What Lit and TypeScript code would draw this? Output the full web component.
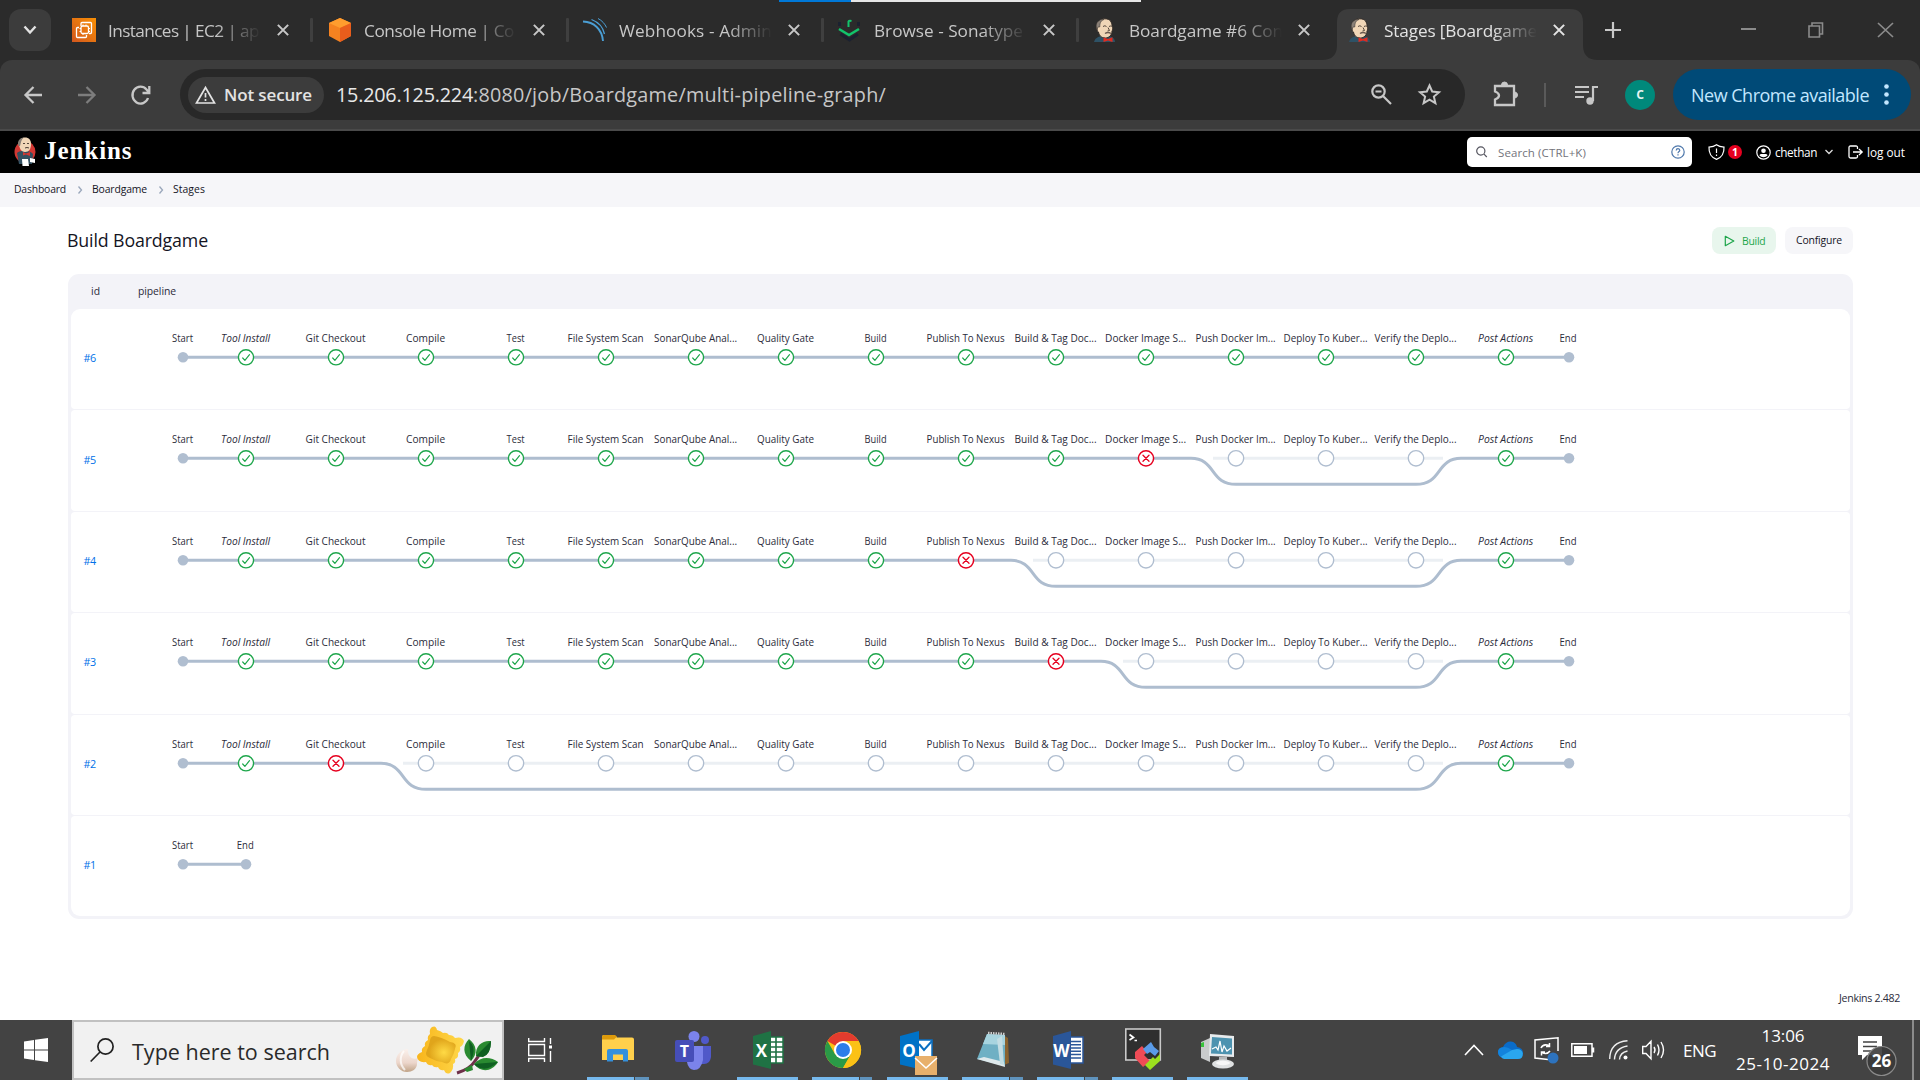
import { LitElement, html, svg, css, nothing } from "lit";
import { customElement } from "lit/decorators.js";

/* ---------- icons ---------- */
const butler = html`<svg class="fav" viewBox="0 0 24 24">
  <path d="M1 24C2 20 5 19 8 18L16 18C20 19 22 21 22 24Z" fill="#2e5266"/>
  <path d="M4 8C4 3 8 .8 12 .8C17 .8 19 4 19 8C20 10 20 12 19 13C19 17 16 20 12.500 20C8 20 6 17 5.500 14C3.500 13 3.500 10 4 8Z" fill="#f0d6b7" stroke="#332c28" stroke-width="1"/>
  <path d="M4 12C2.500 8 3 4 6.500 2.400C8 1 10 1 11 1.500C7 3 7 6 6.800 9L5 9Z" fill="#8a8077" stroke="#332c28" stroke-width=".5"/>
  <path d="M10 8.500Q12 7 13.500 8.500M16 8.500Q17.500 7.500 18.500 8.500M15 9.500L16.500 12.500L14.500 13" fill="none" stroke="#54463c" stroke-width="1"/>
  <path d="M12 15.500Q15 13.500 18 15.500" fill="none" stroke="#6b5b50" stroke-width="1.500"/>
  <path d="M10.500 19.500L15 21L19.500 19.200L19.500 24L15 22.500L10.500 24Z" fill="#e02b20"/>
</svg>`;

const favicons = [
  html`<svg class="fav" viewBox="0 0 24 24"><defs><linearGradient id="e" x1="0" y1="1" x2="1" y2="0"><stop offset="0" stop-color="#d2571e"/><stop offset="1" stop-color="#f99004"/></linearGradient></defs><rect width="24" height="24" fill="url(#e)"/><g fill="none" stroke="#fff" stroke-width="1.300"><path d="M9 8V5.500Q9 4.500 10 4.500H18.500Q19.500 4.500 19.500 5.500V14.500Q19.500 15.500 18.500 15.500H17M7 9.500H5.500Q4.500 9.500 4.500 10.500V18.500Q4.500 19.500 5.500 19.500H13.500Q14.500 19.500 14.500 18.500V17"/><rect x="9" y="8" width="7.500" height="7.500" rx="1.500"/><path d="M11 6.500V8M14 6.500V8M11 15.500V17M7.500 10.500H9M7.500 13.500H9M16.500 10.500H18M16.500 13.500H18" stroke-width="1"/></g></svg>`,
  html`<svg class="fav" viewBox="0 0 24 24"><path d="M12 0L23 5V18L12 24L1 18V5Z" fill="#f58220"/><path d="M12 0L23 5L12 10L1 5Z" fill="#ff9d2e"/><path d="M12 10L23 5V18L12 24Z" fill="#e95d1c"/></svg>`,
  html`<svg class="fav" viewBox="0 0 24 24" fill="none" stroke="#4b9fd5"><path d="M0 3.500C11 4 19 11 20 23" stroke-width="1.900"/><path d="M8.500 1.500C15 4 20 9 21.500 16" stroke-width="1.300"/><path d="M15 .5C19 2.500 22 6 23.500 9.500" stroke-width="1"/></svg>`,
  html`<svg class="fav" viewBox="0 0 24 24" fill="none"><path d="M1.500 4V8M20.500 4V8M2.500 16L11.500 22L20 16" stroke="#1b2130" stroke-width="3"/><path d="M1 11L11 17L21 11" stroke="#12c46c" stroke-width="2.600"/><path d="M10.500 9V3.500Q11 2.500 13.500 3" stroke="#12c46c" stroke-width="2"/></svg>`,
  butler,
  butler,
];

const cross = html`<svg class="x15" viewBox="0 0 15 15"><path d="M2 2L13 13M13 2L2 13" stroke="currentColor" stroke-width="2.200"/></svg>`;

const tabs = [
  ["Instances | EC2 | ap", 151],
  ["Console Home | Co", 150],
  ["Webhooks - Admin", 153],
  ["Browse - Sonatype", 149],
  ["Boardgame #6 Con", 154],
  ["Stages [Boardgame", 153],
] as [string, number][];

/* ---------- pipeline data ---------- */
const stages: [string, number][] = [
  ["Tool Install", 49], ["Git Checkout", 60], ["Compile", 39], ["Test", 18], ["File System Scan", 76],
  ["SonarQube Anal...", 83], ["Quality Gate", 57], ["Build", 22], ["Publish To Nexus", 78], ["Build & Tag Doc...", 82],
  ["Docker Image S...", 81], ["Push Docker Im...", 80], ["Deploy To Kuber...", 84], ["Verify the Deplo...", 82], ["Post Actions", 55],
];
/* `failed` is the index of the failing stage; everything up to Post Actions is skipped after it. */
const runs: { id: string; failed?: number; empty?: boolean }[] = [
  { id: "#6" }, { id: "#5", failed: 10 }, { id: "#4", failed: 8 }, { id: "#3", failed: 9 }, { id: "#2", failed: 1 }, { id: "#1", empty: true },
];
const X0 = 15, Y = 48.3, DROP = 26;
const sx = (i: number) => 78 + i * 90;
const POST = stages.length - 1;
const END = sx(POST) + 63;

@customElement("pipeline-graph")
class PipelineGraph extends LitElement {
  static properties = { run: { attribute: false } };
  declare run: { id: string; failed?: number; empty?: boolean };
  static styles = css`
    :host { display: block; }
    svg { display: block; width: 1500px; height: 100px; }
    text { font: 400 10.500px "Open Sans", "Noto Sans", sans-serif; fill: #2b2b3a; text-anchor: middle; }
    .it { font-style: italic; }
    .line { fill: none; stroke: #aebdcf; stroke-width: 3; }
    .faint { fill: none; stroke: #ebeff3; stroke-width: 3; }
    .dot { fill: #b0bed0; }
    .ok { fill: #fff; stroke: #1ea64b; stroke-width: 1.400; }
    .bad { fill: #fff; stroke: #e6001f; stroke-width: 1.500; }
    .skip { fill: #fff; stroke: #b0bed0; stroke-width: 1.400; }
    .g { fill: none; stroke: #1ea64b; stroke-width: 1.200; stroke-linecap: round; stroke-linejoin: round; }
    .r { fill: none; stroke: #e6001f; stroke-width: 1.300; stroke-linecap: round; }
  `;
  label(x: number, s: string, w: number, it = false) {
    return svg`<text class=${it ? "it" : ""} x=${x} y="33" textLength=${w} lengthAdjust="spacingAndGlyphs">${s}</text>`;
  }
  render() {
    const r = this.run;
    if (r.empty)
      return html`<svg><path class="line" d="M${X0} ${Y}H78"/>
        <circle class="dot" cx=${X0} cy=${Y} r="5.300"/><circle class="dot" cx="78" cy=${Y} r="5.300"/>
        ${this.label(X0 - 0.5, "Start", 21)}${this.label(77.3, "End", 17)}</svg>`;
    const f = r.failed;
    const path = f === undefined
      ? svg`<path class="line" d="M${X0} ${Y}H${END}"/>`
      : svg`<path class="faint" d="M${sx(f) + 67} ${Y}H${sx(POST) - 63}"/>
          <path class="line" d="M${X0} ${Y}H${sx(f) + 45}c12 0 17 6 22 13c5 7 10 13 23 13H${sx(POST) - 90}c13 0 18 -6 23 -13c5 -7 10 -13 22 -13H${END}"/>`;
    return html`<svg>${path}
      <circle class="dot" cx=${X0} cy=${Y} r="5.300"/><circle class="dot" cx=${END} cy=${Y} r="5.300"/>
      ${this.label(X0 - 0.5, "Start", 21)}
      ${stages.map(([name, w], i) => {
        const x = sx(i);
        const skipped = f !== undefined && i > f && i < POST;
        const mark = skipped ? svg`<circle class="skip" cx=${x} cy=${Y} r="7.700"/>`
          : i === f ? svg`<circle class="bad" cx=${x} cy=${Y} r="7.600"/><path class="r" d="M${x - 3} ${Y - 3}l6 6m0 -6l-6 6"/>`
          : svg`<circle class="ok" cx=${x} cy=${Y} r="7.600"/><path class="g" d="M${x - 3.3} ${Y + 0.7}l2.200 2.300l4.600 -5.600"/>`;
        return svg`${this.label(x - 0.4, name, w, i === 0 || i === POST)}${mark}`;
      })}
      ${this.label(END - 1, "End", 17)}</svg>`;
  }
}

/* ---------- taskbar icons ---------- */
const office = (dark: string, light: string, ch: string, lines: unknown) => html`<svg class="app" viewBox="0 0 36 40">
  <rect x="18" y="7" width="15" height="26" fill="#fff" stroke=${light} stroke-width="1.500"/>${lines}
  <path d="M3 6L21 1V39L3 34.500Z" fill=${dark}/><text x="11.500" y="26.500" class="ic">${ch}</text></svg>`;

const apps: { icon: unknown; bar?: number; more?: number }[] = [
  { bar: 47, more: 14, icon: html`<svg class="app" viewBox="0 0 36 40"><path d="M2 7Q2 5 4 5H14L17 7.500H32Q34 7.500 34 9.500V30H2Z" fill="#ffd04c"/><path d="M2 7Q2 5 4 5H15L17 6.500L14 9.500H2Z" fill="#dd9a0b"/><path d="M7 31.500V21Q7 19 9 19H26Q28 19 28 21V31.500H23V24.500H13V31.500Z" fill="#3490dc"/></svg>` },
  { icon: html`<svg class="app" viewBox="0 0 36 40"><circle cx="30" cy="10" r="4" fill="#5059c9"/><circle cx="19" cy="6.500" r="5.500" fill="#7b83eb"/><path d="M25 16H36V27Q35 34 29 34H25Z" fill="#5059c9"/><path d="M12 16H28V30Q26 40 19 40Q13 39 12 32Z" fill="#7b83eb"/><rect x="0" y="10" width="19" height="22" rx="2" fill="#464eb8"/><text x="9.500" y="27" class="ic t">T</text></svg>` },
  { bar: 61, icon: office("#1f7244", "#1f7244", "X", svg`<path d="M21 12H33M21 17H33M21 22H33M21 27H33M26 7V33" stroke="#1f7244" stroke-width="1.600"/>`) },
  { bar: 47, more: 12, icon: html`<svg class="app" viewBox="0 0 36 36"><circle cx="18" cy="18" r="18" fill="#fbc116"/><path d="M18 18L2.400 9A18 18 0 0 1 33.600 9Z" fill="#e33b2e"/><path d="M2.400 9A18 18 0 0 0 18 36L25.800 22.500L18 18L10.200 22.500Z" fill="#2a9a47"/><path d="M18 9H33.600A18 18 0 0 1 18 36L25.800 22.500Z" fill="#fbc116"/><circle cx="18" cy="18" r="9" fill="#fff"/><circle cx="18" cy="18" r="7" fill="#2d7de9"/></svg>` },
  { bar: 61, icon: html`<svg class="app" viewBox="0 0 36 40"><rect x="17" y="10" width="15" height="18" fill="#fff" stroke="#0a6fc2" stroke-width="1.500"/><path d="M19 14L24 20L32 11" stroke="#0a6fc2" stroke-width="2" fill="none"/><path d="M0 6L19 1V39L0 34.500Z" fill="#0072c6"/><text x="9" y="26.500" class="ic">O</text><rect x="15" y="26" width="22" height="19" fill="#e8b06c"/><path d="M15 28L26 38L37 28" stroke="#fff" stroke-width="1.600" fill="none"/></svg>` },
  { bar: 47, more: 13, icon: html`<svg class="app" viewBox="0 0 36 40"><path d="M28 5L33 8L34 33L29 35Z" fill="#8a6330"/><path d="M12 4L30 5L30 36L2 29Z" fill="#6fb0c4"/><path d="M12 4L30 5L30 15L8 14Z" fill="#a7d4df"/><path d="M2 29L9 27L29 32L30 37Z" fill="#dfe9ec"/><path d="M22 9L27 6L29 35L25 34Z" fill="#c3dde3"/><path d="M13 3L30 4" stroke="#cfcfcf" stroke-width="2.500" stroke-dasharray="1.500 1"/></svg>` },
  { bar: 47, more: 13, icon: office("#2a5699", "#2a5699", "W", svg`<path d="M21 11.500H31M21 14.800H31M21 18H31M21 21.300H31M21 24.600H31M21 28H31" stroke="#2a5699" stroke-width="1.500"/>`) },
  { bar: 61, icon: html`<svg class="app" viewBox="0 0 36 40"><rect x=".8" y="-1" width="34.500" height="31" fill="#2f2f2f" stroke="#c9c9c9" stroke-width="1.600"/><path d="M4.500 4.500L8.500 7.500L4.500 10M9.500 10.500H12" stroke="#fff" stroke-width="1.700" fill="none"/><path d="M10 22L17 16L22 22L19 25L25 31L18 37L10 28Z" fill="#ef4b56"/><path d="M18 19L26 12L29 17L34 21L30 26L25 22L22 24Z" fill="#5a9be8"/><path d="M35 24L35 31L25 40L20 35L28 27L30 29Z" fill="#9be01e"/></svg>` },
  { bar: 61, icon: html`<svg class="app" viewBox="0 0 36 40"><path d="M1 12L10 8V32L1 28Z" fill="#c9cbcc"/><path d="M1 13L4 12V17L1 17Z" fill="#39c33c"/><path d="M10 4L34 6V27L9 26Z" fill="#e8ebed"/><path d="M12 7L32 8.500V24.500L11 23.500Z" fill="#4d93b0"/><path d="M12 19L16 17L18 20L20 11L22 22L24 16L27 21L31 18" stroke="#fff" stroke-width="1.200" fill="none"/><path d="M19 27H27V31H19Z" fill="#b5b8ba"/><ellipse cx="23" cy="34" rx="11" ry="4.500" fill="#dfe1e2"/><ellipse cx="23" cy="33" rx="7" ry="2.200" fill="#f7f7f7"/></svg>` },
];

@customElement("app-root")
class AppRoot extends LitElement {
  static styles = css`
    :host { display: block; width: 1920px; height: 1080px; overflow: hidden; background: #fff; font-family: "Open Sans", "Noto Sans", sans-serif; color: #2b2b3a; }
    * { box-sizing: border-box; }
    svg { display: block; flex: none; overflow: visible; }
    .page { display: flex; flex-direction: column; height: 1080px; }
    .f { display: block; white-space: nowrap; flex: none; }
    .sp { flex: 1; }

    /* tab strip */
    .strip { height: 60px; background: #2b2b2b; display: flex; align-items: center; padding: 0 27px 0 9px; position: relative; flex: none; }
    .progress { position: absolute; left: 779px; top: 0; width: 362px; height: 2px; background: linear-gradient(90deg, #0078d7 72px, #e6e6e6 72px); }
    .drop { width: 42px; height: 42px; border-radius: 12px; background: #3c3c3c; display: grid; place-items: center; margin-right: 21px; }
    .tab { width: 255px; height: 60px; display: flex; align-items: center; position: relative; color: #c7c7c7; flex: none; }
    .tab.later { padding-left: 1px; }
    .fav { width: 24px; height: 24px; margin-right: 12px; position: relative; }
    .clip { width: 160px; overflow: hidden; margin-right: 8px; padding-top: 2px; font-size: 17.200px; line-height: 26px; position: relative; -webkit-mask-image: linear-gradient(90deg, #000 108px, transparent 153px); mask-image: linear-gradient(90deg, #000 108px, transparent 153px); }
    .later .clip { margin-right: 7.500px; }
    .x15 { width: 14px; height: 14px; position: relative; }
    .sep { width: 3px; height: 24px; background: #3f3f3f; margin-left: 20px; border-radius: 1px; }
    .shape { position: absolute; left: -25px; top: 9px; }
    .active { color: #e3e3e3; }
    .win { display: flex; gap: 53px; color: #8b8b8b; align-items: center; }
    .plus { color: #c9c9c9; }

    /* toolbar */
    .bar { height: 71px; background: #2b2b2b; flex: none; }
    .tool { height: 71px; background: #3c3c3c; border-radius: 12px 12px 0 0; border-bottom: 2px solid #4a4a4a; display: flex; align-items: center; padding: 0 9px 0 24px; color: #c7c7c7; }
    .omni { width: 1285px; height: 51px; border-radius: 26px; background: #282828; display: flex; align-items: center; padding: 0 24px 0 8px; margin-left: 29px; }
    .chip { width: 136px; height: 36px; border-radius: 18px; background: #3c3c3c; display: flex; align-items: center; padding-left: 7px; gap: 8px; margin-right: 12px; color: #e3e3e3; font-size: 17px; font-weight: 600; }
    .host { color: #e8e8e8; font-size: 19.800px; }
    .url { color: #c7c7c7; font-size: 19.800px; }
    .vdiv { width: 2px; height: 24px; background: #5a5a5a; margin: 0 29px 0 26px; }
    .ava { width: 30px; height: 30px; border-radius: 50%; background: #00897b; color: #e8f5f3; display: grid; place-items: center; font-size: 15.500px; margin: 0 18px 0 27px; font-weight: 600; line-height: 1; padding-bottom: 1px; }
    .new { width: 238px; height: 51px; border-radius: 26px; background: #004a77; color: #c2e7ff; display: flex; align-items: center; font-size: 18px; padding-left: 18px; gap: 15px; }

    /* Jenkins header */
    .head { height: 42px; background: #000; color: #fff; display: flex; align-items: center; padding: 0 15px 0 13px; font-size: 11.800px; font-weight: 500; flex: none; }
    .brand { font: 700 25px "Liberation Serif", serif; margin: 0 0 3px 7px; line-height: 30px; }
    .search { width: 225px; height: 30px; background: #fff; border-radius: 5px; color: #73737b; display: flex; align-items: center; padding: 0 7px 0 9px; margin-right: 16px; font-weight: 400; font-size: 11.500px; gap: 11px; }
    .count { width: 14px; height: 14px; border-radius: 50%; background: #e6001f; font-size: 10.500px; font-weight: 700; line-height: 14px; text-align: center; margin: 0 14px 0 3px; }
    .crumbs { height: 34px; background: #f6f6f9; display: flex; align-items: center; padding: 0 0 2px 14px; font-size: 10.400px; color: #14141f; flex: none; }
    .chev { margin: 2px 10.500px 0 11.500px; }

    /* content */
    .main { padding: 20px 67px 0 68px; height: 813px; display: flex; flex-direction: column; flex: none; }
    .title { display: flex; align-items: center; height: 27px; margin-bottom: 20px; }
    h1 { margin: 0 0 2px -1px; font-size: 17.800px; font-weight: 500; color: #14141f; }
    .btn { height: 27px; border-radius: 8px; display: flex; align-items: center; font-size: 10.400px; background: #f6f6f9; }
    .build { width: 64px; background: #e8f6ed; color: #1ea64b; padding-left: 12px; gap: 7px; margin-right: 9px; }
    .conf { width: 68px; padding-left: 11px; color: #14141f; padding-bottom: 2px; }
    .table { background: #f3f3f8; border-radius: 11px; padding: 0 3px 3px; }
    .th { height: 35px; display: flex; align-items: center; font-size: 10.400px; padding: 0 0 1px 20px; gap: 38px; }
    .rows { display: grid; grid-template-rows: repeat(6, 100.400px); row-gap: 1px; }
    .row { background: #fff; border-radius: 4px; display: flex; overflow: hidden; }
    .row:first-child { border-radius: 9px 9px 4px 4px; }
    .row:last-child { border-radius: 4px 4px 9px 9px; }
    .id { width: 97px; height: 97.500px; display: flex; align-items: center; padding-left: 12.500px; font-size: 10.800px; color: #0071e8; }
    .foot { display: flex; justify-content: flex-end; margin: auto -47px 12px 0; font-size: 10.600px; line-height: 20px; }

    /* taskbar */
    .task { height: 60px; background: #434343; display: flex; align-items: center; color: #fff; flex: none; }
    .start { width: 72px; display: grid; place-items: center; flex: none; }
    .find { width: 432px; height: 60px; background: #f1f1f1; border: 2px solid #c1c1c1; display: flex; align-items: center; padding: 0 4px 0 16px; color: #2a2a2a; font-size: 21.500px; flex: none; }
    .find .f { margin: 2px 0 0 18px; }
    .tv { margin: 0 35px 0 24px; }
    .cell { width: 61px; height: 60px; margin-right: 14px; display: flex; align-items: center; justify-content: center; position: relative; flex: none; }
    .app { width: 36px; height: 40px; }
    .ic { font: 700 17px "Open Sans", sans-serif; fill: #fff; text-anchor: middle; }
    .t { font-size: 16px; }
    .ul { position: absolute; left: 0; bottom: 0; height: 3px; background: #76b9ed; }
    .ul2 { position: absolute; left: 48px; bottom: 0; height: 3px; background: #5f93bd; }
    .tray { display: flex; align-items: center; font-size: 17px; flex: 1; padding-left: 203px; }
    .clock { display: flex; flex-direction: column; align-items: center; width: 94px; margin: 0 28px 0 20px; line-height: 28px; font-size: 17px; flex: none; }
  `;

  /* Spread each label over its designed width by adjusting its tracking. */
  firstUpdated() {
    this.renderRoot.querySelectorAll<HTMLElement>("[data-w]").forEach((el) => {
      const want = Number(el.dataset.w);
      const range = document.createRange();
      range.selectNodeContents(el);
      const have = range.getBoundingClientRect().width;
      const n = (el.textContent ?? "").length;
      el.style.letterSpacing = `${(want - have) / n}px`;
      el.style.width = `${want}px`;
    });
  }

  t(s: string, w: number, cls = "") {
    return html`<span class="f ${cls}" data-w=${w}>${s}</span>`;
  }

  render() {
    return html`<div class="page">
      <div class="strip">
        <div class="progress"></div>
        <div class="drop"><svg width="14" height="10" viewBox="0 0 14 10"><path d="M1.500 1.500L7 7.500L12.500 1.500" fill="none" stroke="#e3e3e3" stroke-width="2.400"/></svg></div>
        ${tabs.map(([s, w], i) => html`<div class="tab ${i ? "later" : ""} ${i === 5 ? "active" : ""}">
          ${i === 5 ? html`<svg class="shape" width="276" height="51"><path d="M0 51Q15 51 15 36V13Q15 0 28 0H248Q261 0 261 13V36Q261 51 276 51Z" fill="#3c3c3c"/></svg>` : nothing}
          ${favicons[i]}<div class="clip">${this.t(s, w)}</div>${cross}${i < 4 ? html`<div class="sep"></div>` : nothing}
        </div>`)}
        <svg class="plus" width="22" height="16" viewBox="0 0 22 16"><path d="M11 0V16M3 8H19" stroke="currentColor" stroke-width="2.200"/></svg>
        <div class="sp"></div>
        <div class="win">
          <svg width="15" height="16"><path d="M0 7H15" stroke="currentColor" stroke-width="2"/></svg>
          <svg width="16" height="16" fill="none" stroke="currentColor" stroke-width="1.600"><path d="M0 4H10.500V15H0ZM3 4V1H13.500V12H10.500"/></svg>
          <svg width="15" height="16"><path d="M0 1L15 15M15 1L0 15" stroke="currentColor" stroke-width="1.700"/></svg>
        </div>
      </div>
      <div class="bar"><div class="tool">
        <svg width="18" height="18" fill="none" stroke="currentColor" stroke-width="2.300"><path d="M18 9H2M9.500 1L1.500 9L9.500 17"/></svg>
        <svg width="54" height="18" viewBox="-36 0 54 18" fill="none" stroke="#7d7d7d" stroke-width="2.300"><path d="M0 9H16M8.500 1L16.500 9L8.500 17"/></svg>
        <svg width="55" height="20" viewBox="-35 0 55 20" fill="none" stroke="currentColor" stroke-width="2.300"><path d="M17 13A8 8.500 0 1 1 15.500 4.500L18 7.500M18.300 1V8H11.500"/></svg>
        <div class="omni">
          <div class="chip"><svg width="21" height="18" viewBox="0 0 21 18" fill="none" stroke="currentColor" stroke-width="1.700"><path d="M10.500 1.500L19.500 17H1.500Z"/><path d="M10.500 7V11.500M10.500 13V15"/></svg>${this.t("Not secure", 88)}</div>
          ${this.t("15.206.125.224", 137, "host")}${this.t(":8080/job/Boardgame/multi-pipeline-graph/", 413, "url")}
          <div class="sp"></div>
          <svg width="21" height="21" viewBox="0 0 21 21" fill="none" stroke="currentColor" stroke-width="2.200"><circle cx="7.500" cy="7.500" r="6.200"/><path d="M12 12L20 20M4.500 7.500H10.500"/></svg>
          <svg width="49" height="23" viewBox="-26 0 49 23" fill="none" stroke="currentColor" stroke-width="2"><path d="M11.500 2.500L14.200 8.500L21 9.200L15.900 13.600L17.400 20.200L11.500 16.700L5.600 20.200L7.100 13.600L2 9.200L8.800 8.500Z"/></svg>
        </div>
        <svg width="53" height="26" viewBox="-28 1 53 26" fill="none" stroke="currentColor" stroke-width="2.300"><path d="M2 5H21V24H2V18.500Q6 17 6 14.500Q6 12 2 10.500Z"/><path d="M8.500 4Q8.500 1 11.500 1Q14.500 1 14.500 4M22 11Q24.500 11.500 24.500 14Q24.500 16.500 22 17" fill="currentColor" stroke-width="1"/></svg>
        <div class="vdiv"></div>
        <svg width="23" height="20" viewBox="0 0 23 20" fill="none" stroke="currentColor" stroke-width="2.200"><path d="M0 2H14M0 7H14M0 12H9M18 16V2H23"/><circle cx="15" cy="16" r="3.700" fill="currentColor" stroke="none"/></svg>
        <div class="ava">c</div>
        <div class="new">${this.t("New Chrome available", 178)}<svg width="5" height="21" fill="currentColor"><circle cx="2.500" cy="2.500" r="2.300"/><circle cx="2.500" cy="10.500" r="2.300"/><circle cx="2.500" cy="18.500" r="2.300"/></svg></div>
      </div></div>

      <div class="head">
        <svg width="24" height="30" viewBox="0 0 24 30"><ellipse cx="12" cy="15" rx="10.500" ry="11" fill="#d33833"/><path d="M4 16C7 13 17 13 20 17L19 27H6Z" fill="#335061"/><path d="M9 22H15L16 29H9.500Z" fill="#fff"/><path d="M17 21L22 22V26L17 25Z" fill="#fff"/><path d="M6 6C6 2 9 .5 12 .5C16 .5 18 3 18 7C18 12 16 15 12 15C8 15 6 11 6 6Z" fill="#f0d6b7"/><path d="M5.500 9C4 5 6 1 10.500 .8C8 3 8 6 7 9Z" fill="#8a8077"/><path d="M10 6.500H12M14 6.500H16M12 11Q14 10 16 11" stroke="#54463c"/><path d="M10 15L13 16.500L17 15V19L13 17.500L10 18.500Z" fill="#d33833"/></svg>
        ${this.t("Jenkins", 88.5, "brand")}
        <div class="sp"></div>
        <div class="search"><svg width="11" height="12" viewBox="0 0 11 12" fill="none" stroke="#55555f" stroke-width="1.200"><circle cx="4.800" cy="5" r="4.100"/><path d="M8 8.200L10.800 11"/></svg>${this.t("Search (CTRL+K)", 88)}<span class="sp"></span>
          <svg width="14" height="14" viewBox="0 0 14 14" fill="none" stroke="#4f78ab" stroke-width="1.200"><circle cx="7" cy="7" r="6.200"/><path d="M5.200 5.500Q5.300 3.700 7 3.700Q8.800 3.800 8.800 5.400Q8.700 6.300 7.600 6.900Q7 7.300 7 8.200M7 9.300V10.600"/></svg></div>
        <svg width="17" height="16" viewBox="0 0 17 16" fill="none" stroke="#fff" stroke-width="1.200"><path d="M8.500 .7C6.500 2.300 3.500 3 1 3.100C.7 9 3.500 13.500 8.500 15.400C13.500 13.500 16.300 9 16 3.100C13.500 3 10.500 2.300 8.500 .7ZM8.500 4.500V9M8.500 10.500V12"/></svg>
        <span class="count">1</span>
        <svg width="15" height="15" viewBox="0 0 15 15"><circle cx="7.500" cy="7.500" r="6.700" fill="none" stroke="#fff" stroke-width="1.200"/><circle cx="7.500" cy="5.700" r="2.300" fill="#fff"/><path d="M3.500 10.500Q3.500 9 5 9H10Q11.500 9 11.500 10.500Q10 12.300 7.500 12.300Q5 12.300 3.500 10.500Z" fill="#fff"/></svg>
        <svg width="4" height="1"></svg>${this.t("chethan", 42)}
        <svg width="31" height="6" viewBox="-8 0 31 6" fill="none" stroke="#ddd" stroke-width="1.300"><path d="M.5 1L4 4.500L7.500 1"/></svg>
        <svg width="19" height="14" viewBox="0 0 19 14" fill="none" stroke="#fff" stroke-width="1.300"><path d="M9.500 4V2.500Q9.500 1 8 1H2.500Q1 1 1 2.500V11.500Q1 13 2.500 13H8Q9.500 13 9.500 11.500V10M5 7H14M11 4L14.200 7L11 10"/></svg>
        ${this.t("log out", 38)}
      </div>
      <div class="crumbs">${this.t("Dashboard", 52)}
        <svg class="chev" width="4" height="8" fill="none" stroke="#9aa7bb" stroke-width="1.300"><path d="M.5 .5L3.500 4L.5 7.500"/></svg>${this.t("Boardgame", 55)}
        <svg class="chev" width="4" height="8" fill="none" stroke="#9aa7bb" stroke-width="1.300"><path d="M.5 .5L3.500 4L.5 7.500"/></svg>${this.t("Stages", 32)}
      </div>

      <div class="main">
        <div class="title"><h1>${this.t("Build Boardgame", 141)}</h1><div class="sp"></div>
          <div class="btn build"><svg width="11" height="12" viewBox="0 0 11 12" fill="none" stroke="#1ea64b" stroke-width="1.200" stroke-linejoin="round"><path d="M1.300 1.300L9.800 6L1.300 10.700Z"/></svg>${this.t("Build", 23.5)}</div>
          <div class="btn conf">${this.t("Configure", 46)}</div>
        </div>
        <div class="table">
          <div class="th">${this.t("id", 9)}${this.t("pipeline", 38)}</div>
          <div class="rows">${runs.map((r) => html`<div class="row"><div class="id">${this.t(r.id, 12)}</div><pipeline-graph .run=${r}></pipeline-graph></div>`)}</div>
        </div>
        <div class="foot">${this.t("Jenkins 2.482", 61)}</div>
      </div>

      <div class="task">
        <div class="start"><svg width="24" height="24" fill="#fff"><path d="M0 3.500L10 2V11.500H0ZM11 1.800L24 0V11.500H11ZM0 12.500H10V22L0 20.500ZM11 12.500H24V24L11 22.200Z"/></svg></div>
        <div class="find">
          <svg width="24" height="24" viewBox="0 0 24 24" fill="none" stroke="#222" stroke-width="1.700"><circle cx="15.500" cy="8.500" r="7.600"/><path d="M10 14L.7 23.500"/></svg>
          ${this.t("Type here to search", 198)}<div class="sp"></div>
          <svg width="102" height="50" viewBox="0 0 102 50">
            <defs><radialGradient id="p" cx=".6" cy=".6"><stop offset="0" stop-color="#ffda45"/><stop offset="1" stop-color="#e0a51b"/></radialGradient><linearGradient id="q"><stop offset="0" stop-color="#f8b51c"/><stop offset="1" stop-color="#ffd84a"/></linearGradient><linearGradient id="gl" x1="0" y1="0" x2="0" y2="1"><stop offset="0" stop-color="#fbf1ec"/><stop offset=".6" stop-color="#ecd6cb"/><stop offset="1" stop-color="#c0a387"/></linearGradient></defs>
            <path d="M12 24C6 24 0 29 0 36C0 42 5 47 11 47C16 47 21 44 21 39Q21 36 22 33C16 36 11 30 12 24Z" fill="url(#gl)"/><path d="M8 26C3 32 4 40 9 45" fill="none" stroke="#fff" stroke-opacity=".7" stroke-width="2"/>
            <path d="M36 2Q40 0 41 5Q45 6 47 8Q51 7 53 10Q57 10 59 13Q66 11 68 16Q67 21 64 22Q65 26 62 28Q63 33 59 34Q60 38 57 39Q58 44 54 48Q50 50 48 45Q44 46 42 42Q38 43 36 40Q32 41 30 37Q22 38 21 32Q21 29 26 27Q25 23 29 21Q28 17 32 15Q31 11 34 9Q33 4 36 2Z" fill="url(#q)"/>
            <path d="M38 11Q45 12 54 17Q62 18 59 24Q58 29 55 34Q53 41 46 37Q39 36 34 33Q28 31 31 25Q33 21 34 15Q35 11 38 11Z" fill="url(#p)"/>
            <path d="M61 48Q74 44 79 36Q84 30 86 24" stroke="#6e3049" stroke-width="3" fill="none"/>
            <path d="M75 36C66 29 67 20 73 14C81 20 82 29 75 36ZM80 31C79 20 87 15 95 16C95 27 90 34 80 31ZM78 39C85 31 95 32 102 37C96 47 85 48 78 39ZM68 44L76 40L77 45L71 47Z" fill="#2a8a31"/><path d="M75 36L73 16Q81 22 75 36ZM80 31L95 16Q95 29 87 32ZM78 39L102 37Q90 48 80 41Z" fill="#0f5f22"/>
          </svg>
        </div>
        <svg class="tv" width="24" height="24" fill="none" stroke="#fff" stroke-width="1.400"><path d="M.7 0V3.500H16.500V0M.7 24V20.500H16.500V24M.7 6.500H16.500V17.500H.7ZM22.500 0V6M22.500 13V24"/><path d="M21 7.500H24V10.500H21Z" fill="#fff" stroke="none"/></svg>
        ${apps.map((a) => html`<div class="cell">${a.icon}${a.bar ? html`<div class="ul" style="width:${a.bar}px"></div>` : nothing}${a.more ? html`<div class="ul2" style="width:${a.more}px"></div>` : nothing}</div>`)}
        <div class="tray">
          <svg width="18" height="12" fill="none" stroke="#fff" stroke-width="1.600"><path d="M0 11L9 1.500L18 11"/></svg>
          <svg width="40" height="18" viewBox="-15 0 40 18"><path d="M5 17Q0 16 0 11Q0 7 5 6Q8 0 13 .5Q18 1 19 6Q25 7 25 12Q25 17 20 17Z" fill="#0a6cc9"/><path d="M5 6.200Q9 5.500 14 9L4 16.500Q0 15 0 11Q0 7 5 6.200Z" fill="#1383dc"/><path d="M3 15.500L14 9L19 8Q24 8 24.800 12.500Q25 18 20 18H6Q4 17.500 3 15.500Z" fill="#2aa6ee"/></svg>
          <svg width="36" height="26" viewBox="-11 0 36 26" fill="none" stroke="#fff" stroke-width="1.500"><path d="M14 22.500L1 21V3L24 .8V14"/><path d="M7 11Q9 6.500 15 8.500M15.500 6V9.500H12M16 14Q13 18 8 15.500M7.500 18.500V15H11"/><circle cx="19" cy="21" r="5.500" fill="#2d73be" stroke="none"/></svg>
          <svg width="35" height="14" viewBox="-12 0 35 14" fill="none" stroke="#fff" stroke-width="1.500"><path d="M.8 .8H21V13.200H.8ZM22.500 4.500V9.500"/><path d="M3 3H16V11H3Z" fill="#fff" stroke="none"/></svg>
          <svg width="34" height="20" viewBox="-15 0 34 20" fill="none" stroke="#eee" stroke-width="1.400"><path d="M.7 19Q1 2 18.500 .8M5.500 19.500Q6 8 18.500 6M10.500 19.500Q11 12.500 18.500 11"/><circle cx="16.500" cy="17.500" r="2" fill="#fff" stroke="none"/></svg>
          <svg width="38" height="20" viewBox="-14 0 38 20" fill="none" stroke="#fff" stroke-width="1.400"><path d="M.7 6.500H4L9 1.200V18.800L4 13.500H.7ZM12 7Q14 10 12 13M15.500 4.500Q18.500 10 15.500 15.500M19 2Q24 10 19 18"/></svg>
          <svg width="17" height="1"></svg>${this.t("ENG", 33)}
          <div class="clock">${this.t("13:06", 43)}${this.t("25-10-2024", 94)}</div>
          <svg width="40" height="44" viewBox="0 0 40 44"><path d="M0 8H24V27H9L4 32V27H0Z" fill="#fff"/><path d="M5 14H19M5 18.500H19M5 23H14" stroke="#434343" stroke-width="1.300"/><circle cx="23.500" cy="33" r="14.500" fill="#3b3b3b" fill-opacity=".9" stroke="#8a8a8a" stroke-width="1.200"/><text x="23.500" y="39" class="ic">26</text></svg>
          <svg width="16" height="60"><path d="M15 0V60" stroke="#8c8c8c" stroke-width="2"/></svg>
        </div>
      </div>
    </div>`;
  }
}
